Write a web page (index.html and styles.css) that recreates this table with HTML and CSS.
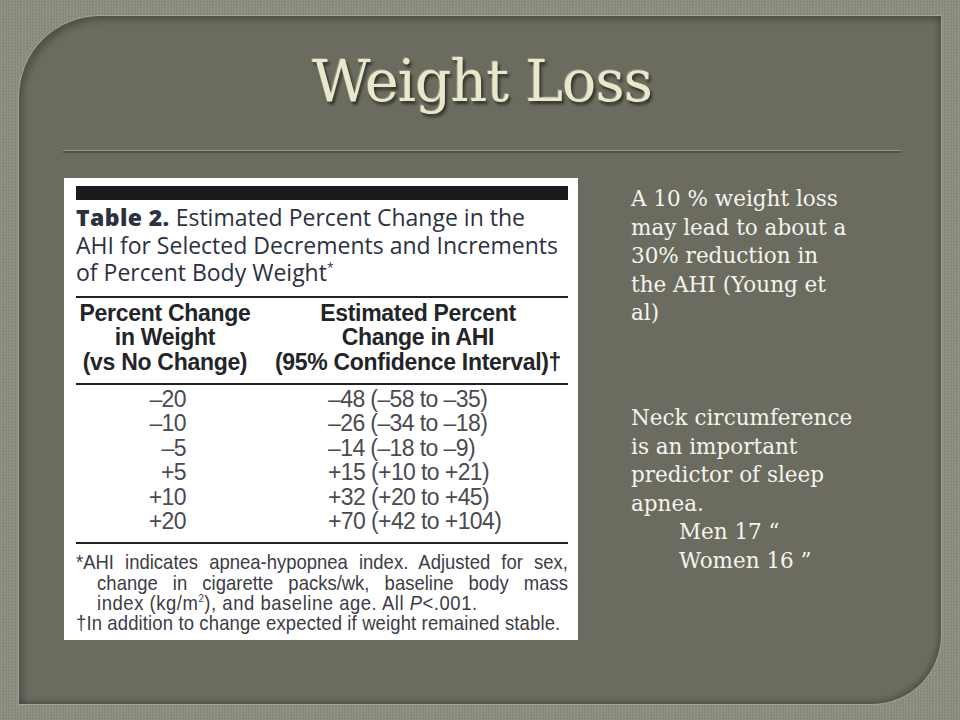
FILE: index.html
```html
<!DOCTYPE html>
<html>
<head>
<meta charset="utf-8">
<link rel="stylesheet" href="styles.css">
</head>
<body>
<div class="slide">
  <div class="panel">
    <h1 class="title">Weight Loss</h1>
    <div class="divider"></div>
    <div class="content">
      <div class="figure">
        <div class="bar"></div>
        <div class="caption"><b>Table 2.</b> Estimated Percent Change in the<br>AHI for Selected Decrements and Increments<br>of Percent Body Weight<sup>*</sup></div>
        <div class="rule"></div>
        <div class="thead">
          <div class="th th1">Percent Change<br>in Weight<br>(vs No Change)</div>
          <div class="th th2">Estimated Percent<br>Change in AHI<br>(95% Confidence Interval)†</div>
        </div>
        <div class="rule"></div>
        <div class="tbody">
          <div class="c1">–20</div><div class="c2">–48 (–58 to –35)</div>
          <div class="c1">–10</div><div class="c2">–26 (–34 to –18)</div>
          <div class="c1">–5</div><div class="c2">–14 (–18 to –9)</div>
          <div class="c1">+5</div><div class="c2">+15 (+10 to +21)</div>
          <div class="c1">+10</div><div class="c2">+32 (+20 to +45)</div>
          <div class="c1">+20</div><div class="c2">+70 (+42 to +104)</div>
        </div>
        <div class="rule"></div>
        <div class="notes">
          <div class="nl just">*AHI indicates apnea-hypopnea index. Adjusted for sex,</div>
          <div class="nl ind just">change in cigarette packs/wk, baseline body mass</div>
          <div class="nl ind wide">index (kg/m<sup>2</sup>), and baseline age. All <i>P</i>&lt;.001.</div>
          <div class="nl last">†In addition to change expected if weight remained stable.</div>
        </div>
      </div>
      <div class="text">
        <p class="para">A 10 % weight loss<br>may lead to about a<br>30% reduction in<br>the AHI (Young et<br>al)</p>
        <p class="para">Neck circumference<br>is an important<br>predictor of sleep<br>apnea.</p>
        <p class="sub">Men 17 “</p>
        <p class="sub">Women 16 ”</p>
      </div>
    </div>
  </div>
</div>
</body>
</html>
```
FILE: styles.css
```css
html, body {
  margin: 0;
  padding: 0;
}
body {
  width: 960px;
  height: 720px;
  overflow: hidden;
  background-color: #8a8d7f;
  background-image:
    repeating-conic-gradient(rgba(255,255,255,0.05) 0 25%, rgba(0,0,0,0.05) 0 50%);
  background-size: 3px 3px;
}
.slide {
  padding: 15px 18px 15px 18px;
  height: 690px;
}
.panel {
  box-sizing: border-box;
  height: 690px;
  background: #6b6c5f;
  border: 1px solid #a3a696;
  border-radius: 82px 0 70px 0;
  box-shadow: inset 4px 4px 6px rgba(0,0,0,0.25), inset -3px -3px 5px rgba(0,0,0,0.2);
  padding: 0 0 0 44px;
}
.title {
  margin: 0;
  padding: 35px 40px 0 0;
  height: 100px;
  box-sizing: border-box;
  text-align: center;
  font-family: "DejaVu Serif", serif;
  font-weight: normal;
  font-size: 57px;
  line-height: 60px;
  letter-spacing: -1px;
  color: #e9e8cb;
  text-shadow: 2px 3px 3px rgba(0,0,0,0.55), -1px -1px 0 rgba(255,255,240,0.25);
}
.divider {
  margin: 34px 40px 0 0;
  height: 1px;
  background: #86a086;
  border-bottom: 2px solid #4d5247;
}
.content {
  display: flex;
  margin-top: 25px;
  margin-left: 1px;
}
.figure {
  box-sizing: border-box;
  width: 514px;
  height: 462px;
  background: #fff;
  padding: 8px 10px 0 12px;
  font-family: "Liberation Sans", Arial, sans-serif;
  overflow: hidden;
}
.bar {
  height: 14px;
  background: #1b1a1c;
}
.caption {
  margin-top: 4px;
  font-family: "Open Sans", sans-serif;
  font-size: 23px;
  line-height: 27.5px;
  color: #2c3142;
  white-space: nowrap;
}
.caption b {
  font-weight: 800;
  letter-spacing: 0.4px;
}
.caption sup {
  font-size: 12px;
  line-height: 0;
}
.rule {
  height: 2px;
  background: #222;
  margin-top: 9px;
}
.thead {
  display: grid;
  grid-template-columns: 178px 1fr;
  padding-top: 3px;
}
.th {
  text-align: center;
  font-weight: bold;
  font-size: 23px;
  line-height: 24.5px;
  letter-spacing: -0.3px;
  color: #222428;
  white-space: nowrap;
}
.th2 {
  padding-left: 14px;
}
.tbody {
  display: grid;
  grid-template-columns: 110px 1fr;
  padding-top: 2px;
  font-size: 23px;
  line-height: 24.4px;
  color: #4a4a50;
  letter-spacing: -0.6px;
}
.c1 {
  text-align: right;
}
.c2 {
  padding-left: 142px;
}
.notes {
  width: 559px;
  transform: scaleX(0.88);
  transform-origin: left top;
  padding-top: 8px;
  font-family: "Liberation Sans", Arial, sans-serif;
  font-size: 21px;
  line-height: 20.3px;
  color: #3c3c46;
}
.nl {
  white-space: nowrap;
}
.nl.just {
  text-align: justify;
  text-align-last: justify;
}
.nl.ind {
  padding-left: 24px;
}
.nl.wide {
  letter-spacing: 0.6px;
}
.nl.last {
  letter-spacing: 0.15px;
}
.nl sup {
  font-size: 11px;
  line-height: 0;
}
.text {
  margin-left: 53px;
  padding-top: 7px;
  font-family: "DejaVu Serif", serif;
  font-size: 21.5px;
  line-height: 28.6px;
  color: #f4f4ee;
  white-space: nowrap;
}
.para {
  margin: 0 0 76px 0;
}
.para + .para {
  margin-bottom: 0;
}
.sub {
  margin: 0;
  padding-left: 48px;
}
```
